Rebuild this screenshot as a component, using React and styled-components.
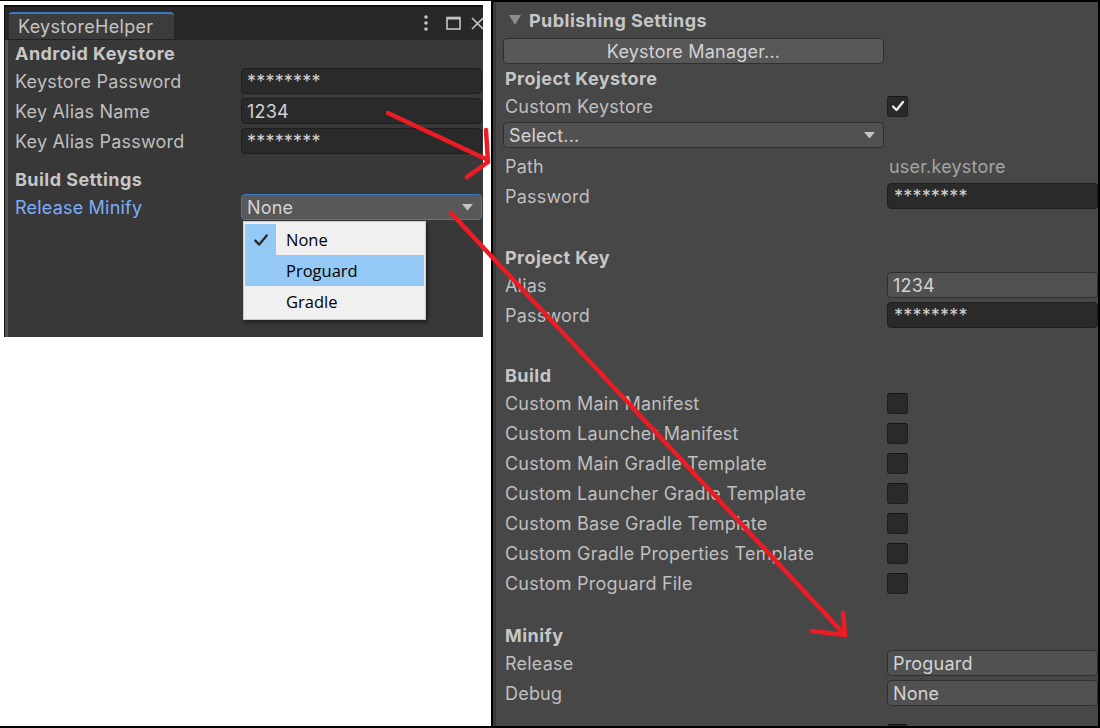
import React from "react";
import styled, { createGlobalStyle } from "styled-components";

const GlobalStyle = createGlobalStyle`
  html, body {
    margin: 0;
    padding: 0;
    background: #fff;
  }
  body {
    font-family: Inter, "Noto Sans", sans-serif;
  }
`;

const Canvas = styled.div`
  position: relative;
  width: 1100px;
  height: 728px;
  box-sizing: border-box;
  border-top: 1px solid #000;
  border-right: 2px solid #000;
  border-bottom: 2px solid #000;
  background: #fff;
  display: flex;
  overflow: hidden;
`;

const LeftSide = styled.div`
  width: 491px;
  flex-shrink: 0;
  box-sizing: border-box;
  padding: 4px 7px 0 4px;
`;

const Window = styled.div`
  width: 479px;
  height: 332px;
  box-sizing: border-box;
  background: #383838;
  border-top: 2px solid #111;
  border-left: 1px solid #111;
  display: flex;
  flex-direction: column;
  overflow: hidden;
`;

const TabBar = styled.div`
  height: 33px;
  flex-shrink: 0;
  background: #282828;
  border-bottom: 1px solid #232323;
  box-sizing: border-box;
  display: flex;
  align-items: flex-end;
  padding-left: 4px;
`;

const Tab = styled.div`
  width: 165px;
  height: 27px;
  box-sizing: border-box;
  background: #3c3c3c;
  border-top: 2px solid #3a79c4;
  border-radius: 3px 4px 0 0;
  padding-left: 9px;
  display: flex;
  align-items: center;
  font-size: 18px;
  letter-spacing: 0.3px;
  color: #c4c4c4;
`;

const WindowButtons = styled.div`
  margin-left: auto;
  align-self: center;
  display: flex;
  align-items: center;
  margin-right: -1px;
`;

const ButtonSlot = styled.div`
  display: flex;
  margin-left: ${(p) => p.$gap || 0}px;
`;

const Content = styled.div`
  flex: 1;
  padding: 1px 1px 0 10px;
  box-shadow: inset 3px 0 0 #58534c;
  display: flex;
  flex-direction: column;
`;

const Header = styled.div`
  height: 25px;
  flex-shrink: 0;
  display: flex;
  align-items: center;
  margin-top: ${(p) => p.$gap || 0}px;
  padding-left: ${(p) => p.$indent || 0}px;
  font-size: 18px;
  font-weight: 700;
  letter-spacing: 0.45px;
  color: #c6c6c6;
`;

const Row = styled.div`
  height: 30px;
  flex-shrink: 0;
  display: flex;
  align-items: ${(p) => (p.$top ? "flex-start" : "center")};
  margin-top: ${(p) => p.$gap || 0}px;
`;

const Label = styled.div`
  width: ${(p) => p.$w}px;
  flex-shrink: 0;
  box-sizing: border-box;
  padding-left: ${(p) => p.$indent || 0}px;
  font-size: 18px;
  letter-spacing: 0.2px;
  color: ${(p) => (p.$accent ? "#7baefa" : "#bfbfbf")};
  white-space: nowrap;
`;

const Field = styled.div`
  flex: 1;
  height: 26px;
  box-sizing: border-box;
  background: #2a2a2a;
  border: 1px solid #1e1e1e;
  border-radius: 4px;
  padding-left: ${(p) => p.$pad || 5}px;
  display: flex;
  align-items: center;
  font-size: 18px;
  letter-spacing: 0.2px;
  color: #d2d2d2;
  white-space: nowrap;
`;

const Value = styled.div`
  font-size: 18px;
  letter-spacing: 0.2px;
  color: #a4a4a4;
  padding-left: 2px;
`;

const PopupWrap = styled.div`
  position: relative;
  flex: 1;
  display: flex;
`;

const Dropdown = styled.div`
  flex: ${(p) => (p.$w ? "none" : 1)};
  width: ${(p) => (p.$w ? `${p.$w}px` : "auto")};
  height: 26px;
  margin-top: ${(p) => p.$mt || 0}px;
  box-sizing: border-box;
  background: ${(p) => (p.$focused ? "#585858" : "#515151")};
  border: 1px solid ${(p) => (p.$focused ? "#3a79bb" : "#303030")};
  border-radius: 4px;
  padding: 0 8px 0 5px;
  display: flex;
  align-items: center;
  justify-content: space-between;
  font-size: 18px;
  letter-spacing: 0.2px;
  color: #d4d4d4;
  white-space: nowrap;
`;

const Menu = styled.div`
  position: absolute;
  left: 2px;
  top: 27px;
  width: 183px;
  box-sizing: border-box;
  background: #f0f0f0;
  border: 1px solid #cbcbcb;
  box-shadow: 2px 3px 3px rgba(0, 0, 0, 0.4);
  padding: 2px 1px;
  font-family: "Segoe UI", "Open Sans", "Noto Sans", sans-serif;
  font-size: 16.5px;
  color: #000;
  z-index: 2;
`;

const MenuItem = styled.div`
  height: 31px;
  display: flex;
  align-items: center;
  background: ${(p) => (p.$hover ? "#94c9f5" : "transparent")};
`;

const CheckCell = styled.div`
  width: 31px;
  height: 100%;
  margin-right: 10px;
  background: ${(p) => (p.$checked ? "#94c9f5" : "transparent")};
  display: flex;
  align-items: center;
  justify-content: center;
`;

const Inspector = styled.div`
  flex: 1;
  background: #474747;
  border-left: 2px solid #000;
  border-top: 1px solid #000;
  box-shadow: inset 3px 0 0 #3a3a3a;
  padding: 5px 0 0 10px;
  display: flex;
  flex-direction: column;
  overflow: hidden;
`;

const Foldout = styled.div`
  height: 26px;
  flex-shrink: 0;
  display: flex;
  align-items: center;
  gap: 8px;
  padding-left: 6px;
  font-size: 18px;
  font-weight: 700;
  letter-spacing: 0.45px;
  color: #c6c6c6;
`;

const Button = styled.div`
  width: 381px;
  height: 26px;
  flex-shrink: 0;
  margin-top: 5px;
  box-sizing: border-box;
  background: #585858;
  border: 1px solid #303030;
  border-radius: 4px;
  display: flex;
  align-items: center;
  justify-content: center;
  font-size: 18px;
  letter-spacing: 0.2px;
  color: #d2d2d2;
`;

const Checkbox = styled.div`
  width: 21px;
  height: 21px;
  box-sizing: border-box;
  background: #2a2a2a;
  border: 1px solid #1f1f1f;
  border-top-color: #151515;
  border-radius: 3px;
  display: flex;
  align-items: center;
  justify-content: center;
`;

const Arrows = styled.svg`
  position: absolute;
  left: 0;
  top: -1px;
  pointer-events: none;
  z-index: 5;
`;

const Caret = () => (
  <svg width="11" height="7" viewBox="0 0 11 7">
    <polygon points="0,0 11,0 5.5,6.5" fill="#c4c4c4" />
  </svg>
);

const Tick = ({ color = "#ececec", w = 14, sw = 2.3 }) => (
  <svg width={w} height={w} viewBox="0 0 14 14">
    <path d="M2 7.5 L5.5 11 L12 3" fill="none" stroke={color} strokeWidth={sw} strokeLinecap="round" strokeLinejoin="round" />
  </svg>
);

const Kebab = () => (
  <svg width="6" height="16" viewBox="0 0 6 16">
    <circle cx="3" cy="2" r="1.8" fill="#c4c4c4" />
    <circle cx="3" cy="8" r="1.8" fill="#c4c4c4" />
    <circle cx="3" cy="14" r="1.8" fill="#c4c4c4" />
  </svg>
);

const Maximize = () => (
  <svg width="15" height="14" viewBox="0 0 15 14">
    <rect x="1" y="1.5" width="13" height="11.5" fill="none" stroke="#c4c4c4" strokeWidth="1.6" />
    <rect x="1" y="1" width="13" height="2.5" fill="#c4c4c4" />
  </svg>
);

const Close = () => (
  <svg width="13" height="13" viewBox="0 0 13 13">
    <path d="M1 1 L12 12 M12 1 L1 12" stroke="#c4c4c4" strokeWidth="1.6" />
  </svg>
);

const buildFiles = [
  "Custom Main Manifest",
  "Custom Launcher Manifest",
  "Custom Main Gradle Template",
  "Custom Launcher Gradle Template",
  "Custom Base Gradle Template",
  "Custom Gradle Properties Template",
  "Custom Proguard File",
];

const LW = 226;
const RW = 384;

const App = () => {
  return (
    <>
      <GlobalStyle />
      <Canvas>
        <LeftSide>
          <Window>
            <TabBar>
              <Tab>KeystoreHelper</Tab>
              <WindowButtons>
                <ButtonSlot>
                  <Kebab />
                </ButtonSlot>
                <ButtonSlot $gap={17}>
                  <Maximize />
                </ButtonSlot>
                <ButtonSlot $gap={10}>
                  <Close />
                </ButtonSlot>
              </WindowButtons>
            </TabBar>
            <Content>
              <Header>Android Keystore</Header>
              <Row>
                <Label $w={LW}>Keystore Password</Label>
                <Field>********</Field>
              </Row>
              <Row>
                <Label $w={LW}>Key Alias Name</Label>
                <Field>1234</Field>
              </Row>
              <Row>
                <Label $w={LW}>Key Alias Password</Label>
                <Field>********</Field>
              </Row>
              <Header $gap={11}>Build Settings</Header>
              <Row>
                <Label $w={LW} $accent>Release Minify</Label>
                <PopupWrap>
                  <Dropdown $focused>
                    None
                    <Caret />
                  </Dropdown>
                  <Menu>
                    <MenuItem>
                      <CheckCell $checked>
                        <Tick color="#2b2b2b" w={16} sw={2} />
                      </CheckCell>
                      None
                    </MenuItem>
                    <MenuItem $hover>
                      <CheckCell />
                      Proguard
                    </MenuItem>
                    <MenuItem>
                      <CheckCell />
                      Gradle
                    </MenuItem>
                  </Menu>
                </PopupWrap>
              </Row>
            </Content>
          </Window>
        </LeftSide>

        <Inspector>
          <Foldout>
            <svg width="12" height="10" viewBox="0 0 12 10">
              <polygon points="0,0 12,0 6,10" fill="#8c8c8c" />
            </svg>
            Publishing Settings
          </Foldout>
          <Button>Keystore Manager...</Button>
          <Header $indent={2} $gap={2}>Project Keystore</Header>
          <Row>
            <Label $w={RW} $indent={2}>Custom Keystore</Label>
            <Checkbox>
              <Tick />
            </Checkbox>
          </Row>
          <Row $top>
            <Dropdown $w={381} $mt={1}>
              Select...
              <Caret />
            </Dropdown>
          </Row>
          <Row>
            <Label $w={RW} $indent={2}>Path</Label>
            <Value>user.keystore</Value>
          </Row>
          <Row>
            <Label $w={RW} $indent={2}>Password</Label>
            <Field $pad={6}>********</Field>
          </Row>

          <Header $indent={2} $gap={34}>Project Key</Header>
          <Row>
            <Label $w={RW} $indent={2}>Alias</Label>
            <Dropdown>1234</Dropdown>
          </Row>
          <Row>
            <Label $w={RW} $indent={2}>Password</Label>
            <Field $pad={6}>********</Field>
          </Row>

          <Header $indent={2} $gap={33}>Build</Header>
          {buildFiles.map((name) => (
            <Row key={name}>
              <Label $w={RW} $indent={2}>{name}</Label>
              <Checkbox />
            </Row>
          ))}

          <Header $indent={2} $gap={25}>Minify</Header>
          <Row>
            <Label $w={RW} $indent={2}>Release</Label>
            <Dropdown>Proguard</Dropdown>
          </Row>
          <Row>
            <Label $w={RW} $indent={2}>Debug</Label>
            <Dropdown>None</Dropdown>
          </Row>
          <Row $gap={11}>
            <Label $w={RW} $indent={2} />
            <Checkbox />
          </Row>
        </Inspector>

        <Arrows width="1100" height="728" viewBox="0 0 1100 728">
          <g fill="none" stroke="#ed1c24" strokeWidth="4.5" strokeLinecap="round" strokeLinejoin="round">
            <path d="M388 113 L488 160" />
            <path d="M486 130 L488 162" />
            <path d="M467 177 L488 162" />
            <path d="M451 213 L845 635" />
            <path d="M843 613 L845 635" />
            <path d="M812 631 L845 635" />
          </g>
        </Arrows>
      </Canvas>
    </>
  );
};

export default App;
